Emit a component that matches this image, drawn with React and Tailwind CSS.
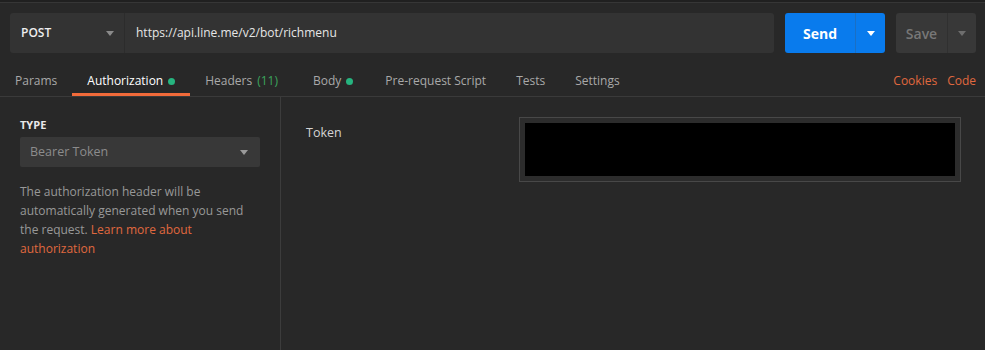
function Caret({ className = '' }) {
  return (
    <svg width="8" height="5" viewBox="0 0 8 5" className={className}>
      <path d="M0 0h8L4 5z" fill="currentColor" />
    </svg>
  )
}

const tabs = [
  { label: 'Params', pad: 'px-[15px]' },
  { label: 'Authorization', active: true, dot: true, pad: 'px-[15px]' },
  { label: 'Headers', count: '(11)', pad: 'pl-[15px] pr-[20px]' },
  { label: 'Body', dot: true, pad: 'pl-[15px] pr-[17px]' },
  { label: 'Pre-request Script', pad: 'px-[15px]' },
  { label: 'Tests', pad: 'px-[15px]' },
  { label: 'Settings', pad: 'px-[15px]' },
]

export default function App() {
  return (
    <div className="h-[350px] w-[985px] overflow-hidden bg-[#282828] font-['Open_Sans',sans-serif] text-[12px] text-[#a9a9a9]">
      <div className="h-[2px] bg-[#202020]" />
      <div className="h-px bg-[#363636]" />

      {/* request bar */}
      <div className="mt-[10px] flex h-[40px] items-stretch gap-[11px] pl-[10px] pr-[9px]">
        <div className="flex flex-1 rounded-[3px] bg-[#333333]">
          <div className="flex w-[115px] items-center justify-between border-r border-[#2c2c2c] pl-[11px] pr-[10px] font-semibold text-[#eeeeee]">
            <span>POST</span>
            <Caret className="text-[#8a8a8a]" />
          </div>
          <div className="flex items-center pl-[11px] text-[#e6e6e6]">https://api.line.me/v2/bot/richmenu</div>
        </div>
        <div className="flex w-[100px] rounded-[3px] bg-[#097bed] text-white">
          <div className="flex flex-1 items-center justify-center border-r border-[#1a6fc4] text-[14px] font-bold">Send</div>
          <div className="flex w-[29px] items-center justify-center">
            <Caret />
          </div>
        </div>
        <div className="flex w-[80px] rounded-[3px] bg-[#383838] text-[#777777]">
          <div className="flex flex-1 items-center justify-center border-r border-[#303030] text-[14px] font-semibold">Save</div>
          <div className="flex w-[28px] items-center justify-center">
            <Caret className="text-[#6e6e6e]" />
          </div>
        </div>
      </div>

      {/* tabs */}
      <div className="mt-[13px] flex h-[31px] items-stretch border-b border-[#3a3a3a] pr-[9px] text-[12px]">
        {tabs.map((t) => (
          <div
            key={t.label}
            className={`flex items-center ${t.pad} ${
              t.active ? 'border-b-[3px] border-[#f26b3a] pt-[3px] text-white' : ''
            }`}
          >
            <span>{t.label}</span>
            {t.count && <span className="ml-[5px] text-[#3ba55d]">{t.count}</span>}
            {t.dot && <span className="ml-[5px] h-[7px] w-[7px] rounded-full bg-[#26b47f]" />}
          </div>
        ))}
        <div className="ml-auto flex items-center gap-[10px] text-[#e0683f]">
          <span>Cookies</span>
          <span>Code</span>
        </div>
      </div>

      {/* body */}
      <div className="flex h-[253px]">
        <div className="w-[281px] shrink-0 border-r border-[#3c3c3c] px-[20px] pt-[20px]">
          <div className="text-[11px] font-bold text-[#e8e8e8]">TYPE</div>
          <div className="mt-[3px] flex h-[30px] w-[240px] items-center justify-between rounded-[2px] bg-[#383838] pl-[10px] pr-[12px] pt-[2px] text-[12.5px] text-[#8c8c8c]">
            <span>Bearer Token</span>
            <Caret className="text-[#9a9a9a]" />
          </div>
          <p className="mt-[15px] text-[12px] leading-[19px] text-[#989898]">
            The authorization header will be automatically generated when you send the request.{' '}
            <span className="text-[#e0683f]">Learn more about authorization</span>
          </p>
        </div>
        <div className="flex flex-1 pl-[25px] pt-[20px]">
          <div className="w-[213px] pt-[7px] text-[12.5px] text-[#d4d4d4]">Token</div>
          <div className="h-[65px] w-[442px] border border-[#484848] bg-[#2c2c2c] p-[5px]">
            <div className="h-full w-full bg-black" />
          </div>
        </div>
      </div>
    </div>
  )
}
